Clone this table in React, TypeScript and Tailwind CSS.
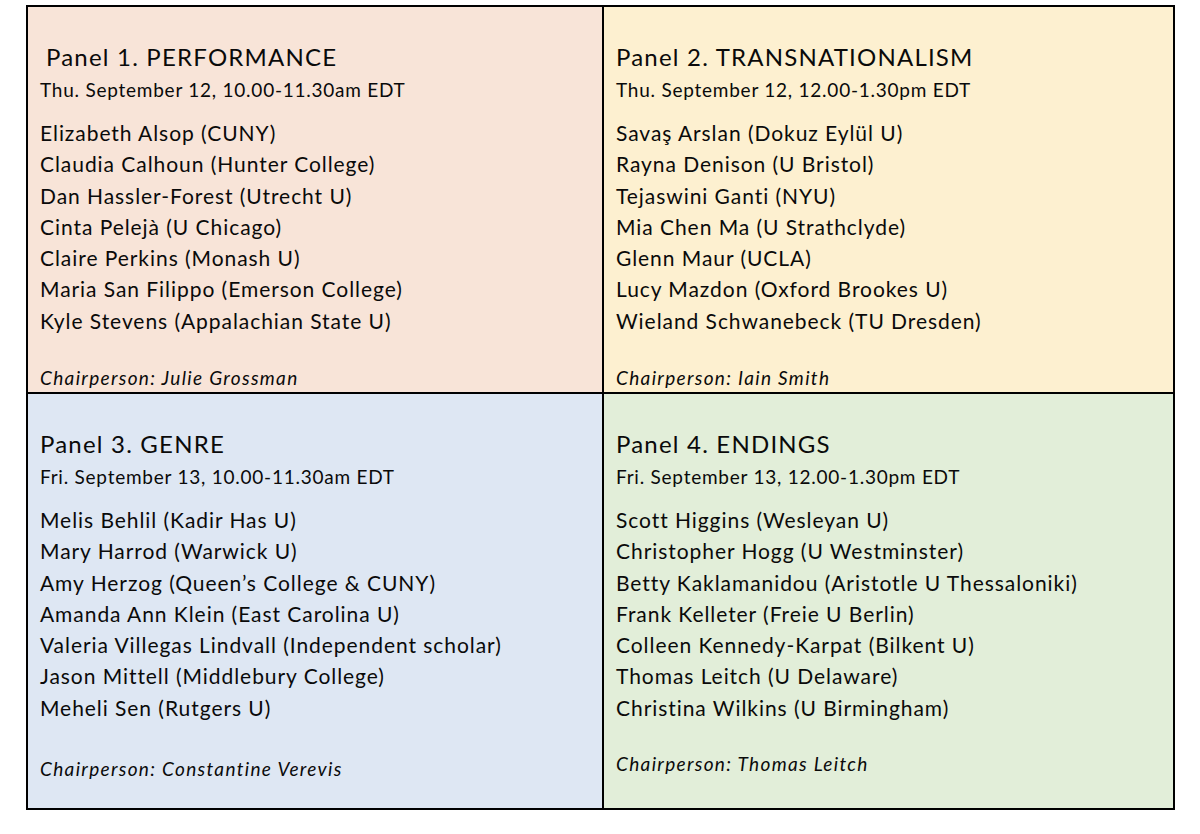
const PANELS = [
  {
    title: 'Panel 1. PERFORMANCE',
    date: 'Thu. September 12, 10.00-11.30am EDT',
    names: [
      'Elizabeth Alsop (CUNY)',
      'Claudia Calhoun (Hunter College)',
      'Dan Hassler-Forest (Utrecht U)',
      'Cinta Pelejà (U Chicago)',
      'Claire Perkins (Monash U)',
      'Maria San Filippo (Emerson College)',
      'Kyle Stevens (Appalachian State U)',
    ],
    chair: 'Chairperson: Julie Grossman',
    bg: 'bg-[#f8e4d8]',
    titleIndent: 'pl-[6px]',
    chairGap: 'mt-[30px]',
  },
  {
    title: 'Panel 2. TRANSNATIONALISM',
    date: 'Thu. September 12, 12.00-1.30pm EDT',
    names: [
      'Savaş Arslan (Dokuz Eylül U)',
      'Rayna Denison (U Bristol)',
      'Tejaswini Ganti (NYU)',
      'Mia Chen Ma (U Strathclyde)',
      'Glenn Maur (UCLA)',
      'Lucy Mazdon (Oxford Brookes U)',
      'Wieland Schwanebeck (TU Dresden)',
    ],
    chair: 'Chairperson: Iain Smith',
    bg: 'bg-[#fdf0d0] border-l-2 border-black',
    titleIndent: '',
    chairGap: 'mt-[30px]',
  },
  {
    title: 'Panel 3. GENRE',
    date: 'Fri. September 13, 10.00-11.30am EDT',
    names: [
      'Melis Behlil (Kadir Has U)',
      'Mary Harrod (Warwick U)',
      'Amy Herzog (Queen’s College & CUNY)',
      'Amanda Ann Klein (East Carolina U)',
      'Valeria Villegas Lindvall (Independent scholar)',
      'Jason Mittell (Middlebury College)',
      'Meheli Sen (Rutgers U)',
    ],
    chair: 'Chairperson: Constantine Verevis',
    bg: 'bg-[#dee7f3] border-t-2 border-black',
    titleIndent: '',
    chairGap: 'mt-[34px]',
  },
  {
    title: 'Panel 4. ENDINGS',
    date: 'Fri. September 13, 12.00-1.30pm EDT',
    names: [
      'Scott Higgins (Wesleyan U)',
      'Christopher Hogg (U Westminster)',
      'Betty Kaklamanidou (Aristotle U Thessaloniki)',
      'Frank Kelleter (Freie U Berlin)',
      'Colleen Kennedy-Karpat (Bilkent U)',
      'Thomas Leitch (U Delaware)',
      'Christina Wilkins (U Birmingham)',
    ],
    chair: 'Chairperson: Thomas Leitch',
    bg: 'bg-[#e2eed9] border-t-2 border-l-2 border-black',
    titleIndent: '',
    chairGap: 'mt-[29px]',
  },
]

function Panel({ p }: { p: (typeof PANELS)[number] }) {
  return (
    <div className={`flex flex-col px-[12px] pt-[35px] ${p.bg}`}>
      <h2 className={`text-[24px] leading-[30px] tracking-[0.05em] ${p.titleIndent}`}>{p.title}</h2>
      <p className="mt-[6px] text-[19px] leading-[24px] tracking-[0.04em]">{p.date}</p>
      <ul className="mt-[15px] text-[21px] leading-[31.3px] tracking-[0.045em]">
        {p.names.map((n) => (
          <li key={n}>{n}</li>
        ))}
      </ul>
      <p className={`${p.chairGap} text-[19px] leading-[24px] italic tracking-[0.07em]`}>{p.chair}</p>
    </div>
  )
}

export default function App() {
  return (
    <div className="h-[834px] w-[1200px] bg-white pl-[26px] pt-[5px] font-['Lato',sans-serif] text-[#0a0a0a]">
      <div className="grid h-[805px] w-[1149px] grid-cols-[574px_1fr] grid-rows-[385px_1fr] border-2 border-black">
        {PANELS.map((p) => (
          <Panel key={p.title} p={p} />
        ))}
      </div>
    </div>
  )
}
